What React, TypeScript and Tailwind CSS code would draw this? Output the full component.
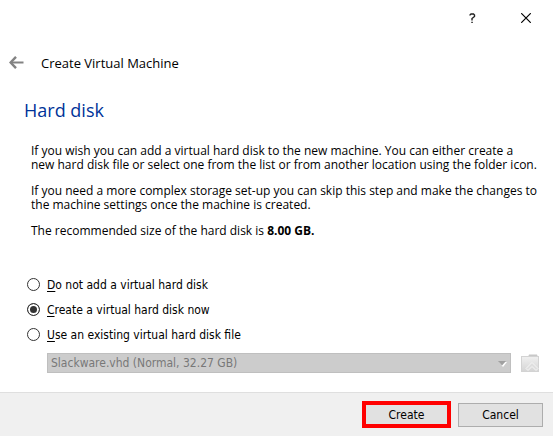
import { useState } from "react";

const DISK_OPTIONS = [
    { id: "none", hotkey: "D", text: "o not add a virtual hard disk" },
    { id: "create", hotkey: "C", text: "reate a virtual hard disk now" },
    { id: "existing", hotkey: "U", text: "se an existing virtual hard disk file" },
];

function TitleBar() {
    return (
        <div className="flex h-9 justify-end">
            <button type="button" aria-label="Help" className="flex w-[53px] items-center justify-center">
                <svg width="7" height="11" viewBox="0 0 7 11" fill="none" stroke="#222" strokeWidth="1.4">
                    <path d="M1 2.5V2L2 1H4.5L5.5 2V3.5L3 5.5V7.5" />
                    <path d="M2.3 9.4H3.8" />
                </svg>
            </button>
            <button type="button" aria-label="Close" className="flex w-[54px] items-center justify-center">
                <svg width="10" height="10" viewBox="0 0 10 10" fill="none" stroke="#000" strokeWidth="1.2">
                    <path d="M0.2 0.2L9.8 9.8M9.8 0.2L0.2 9.8" />
                </svg>
            </button>
        </div>
    );
}

function BackIcon() {
    return (
        <svg width="15" height="13" viewBox="0 0 15 13" fill="none" stroke="#838383">
            <path d="M2 6.5H14.5" strokeWidth="2" />
            <path d="M7 0.8L1.6 6.5L7 12.2" strokeWidth="2.4" />
        </svg>
    );
}

function FolderIcon() {
    return (
        <svg width="18" height="18" viewBox="0 0 18 18">
            <defs>
                <linearGradient id="folder" x1="0" y1="0" x2="0" y2="1">
                    <stop offset="0" stopColor="#f0f0f0" />
                    <stop offset="1" stopColor="#d4d4d4" />
                </linearGradient>
            </defs>
            <path d="M7 3L8 0.5H16L17 3Z" fill="#c8c8c8" />
            <rect x="0.5" y="2.5" width="17" height="15" fill="url(#folder)" stroke="#d3d3d3" />
            <path
                d="M11 8.5L17 14.5L15 16.5L11 12.5L7 16.5L5 14.5Z"
                fill="#dedede"
                stroke="#f6f6f6"
                strokeWidth="1"
            />
        </svg>
    );
}

export default function App() {
    const [selected, setSelected] = useState("create");

    return (
        <div className="flex min-h-screen flex-col border-r border-white bg-white font-['DejaVu_Sans_Condensed','DejaVu_Sans',sans-serif] text-[12px] leading-[14px] text-black">
            <TitleBar />

            <header className="flex h-13 items-center gap-[17px] pl-[9px]">
                <button type="button" aria-label="Back">
                    <BackIcon />
                </button>
                <h2 className="pt-px font-['Open_Sans',sans-serif] text-[13px] leading-4">Create Virtual Machine</h2>
            </header>

            <main className="flex-1 px-6 pt-3 pb-[18px]">
                <h1 className="font-['Open_Sans',sans-serif] text-[18px] leading-5 text-[#003399]">Hard disk</h1>

                <div className="mt-6 flex flex-col gap-3 pl-[7px] font-['Open_Sans',sans-serif] whitespace-nowrap">
                    <p>
                        If you wish you can add a virtual hard disk to the new machine. You can either create a
                        <br />
                        new hard disk file or select one from the list or from another location using the folder icon.
                    </p>
                    <p>
                        If you need a more complex storage set-up you can skip this step and make the changes to
                        <br />
                        the machine settings once the machine is created.
                    </p>
                    <p>
                        The recommended size of the hard disk is <b>8.00 GB.</b>
                    </p>
                </div>

                <div className="mt-10 flex flex-col gap-3 pl-[3px]">
                    {DISK_OPTIONS.map((option) => (
                        <label key={option.id} className="flex h-[13px] items-center gap-[7px]">
                            <input
                                type="radio"
                                name="disk"
                                value={option.id}
                                checked={selected === option.id}
                                onChange={() => setSelected(option.id)}
                                className="size-[13px] appearance-none rounded-full border border-[#333] bg-white checked:bg-[#333] checked:shadow-[inset_0_0_0_2px_white]"
                            />
                            <span>
                                <u className="underline-offset-2">{option.hotkey}</u>
                                {option.text}
                            </span>
                        </label>
                    ))}
                </div>

                <div className="-mr-[10px] mt-3 flex items-center gap-[10px] pl-[23px]">
                    <div className="relative flex-1">
                        <select
                            aria-label="Virtual hard disk file"
                            disabled={selected !== "existing"}
                            className="block h-5 w-full appearance-none border border-[#bfbfbf] bg-[#cccccc] px-[3px] text-[#787878] opacity-100"
                        >
                            <option>Slackware.vhd (Normal, 32.27 GB)</option>
                        </select>
                        <svg className="pointer-events-none absolute top-2 right-1" width="9" height="6" viewBox="0 0 9 6">
                            <path d="M1 1H9L5 6Z" fill="#fff" />
                            <path d="M0 0H8L4 4.5Z" fill="#a0a0a0" />
                        </svg>
                    </div>
                    <button type="button" aria-label="Choose a virtual hard disk file" disabled={selected !== "existing"}>
                        <FolderIcon />
                    </button>
                </div>
            </main>

            <footer className="flex items-center justify-end gap-[7px] border-t border-[#dfdfdf] bg-[#f0f0f0] px-[10px] py-2">
                <button type="button" className="h-[27px] w-[89px] border-4 border-[#ff0000] bg-[#e1e1e1]">
                    Create
                </button>
                <button type="button" className="h-6 w-[85px] border border-[#adadad] bg-[#e1e1e1]">
                    Cancel
                </button>
            </footer>
        </div>
    );
}
